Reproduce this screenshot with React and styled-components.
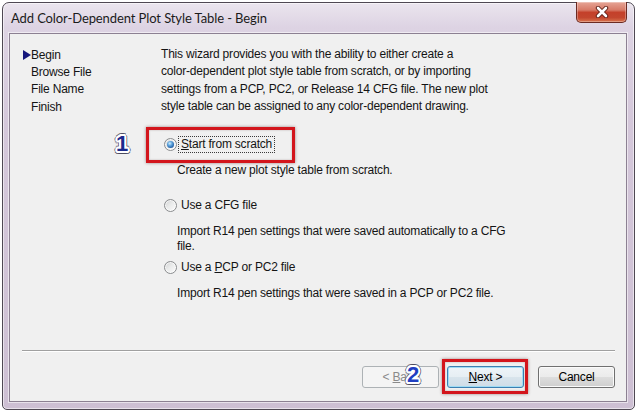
import React from "react";
import styled, { createGlobalStyle, css } from "styled-components";

const GlobalStyle = createGlobalStyle`
  html, body {
    margin: 0;
    background: #ffffff;
  }
  body {
    padding: 2px;
    font-family: "Liberation Sans", Arial, sans-serif;
  }
`;

// ring of hard text-shadows, used to outline the numbered callout badges
const ring = (r, color) => {
  const steps = 12;
  const out = [];
  for (let i = 0; i < steps; i++) {
    const a = (i / steps) * Math.PI * 2;
    out.push(`${(Math.cos(a) * r).toFixed(2)}px ${(Math.sin(a) * r).toFixed(2)}px 0 ${color}`);
  }
  return out.join(", ");
};

const Window = styled.div`
  box-sizing: border-box;
  width: 633px;
  height: 408px;
  display: flex;
  flex-direction: column;
  padding: 0 7px 7px 6px;
  border: 1px solid #4f4853;
  border-radius: 7px 7px 5px 5px;
  background: linear-gradient(180deg, #ebe5ee 0%, #ddd3e3 6%, #d4c7da 30%, #cdbfd3 100%);
  box-shadow: inset 0 0 0 1px rgba(255, 255, 255, 0.55);
`;

const TitleBar = styled.div`
  flex: 0 0 30px;
  display: flex;
  align-items: flex-start;
`;

const Title = styled.div`
  margin: 7px 0 0 2px;
  font-family: Lato, "Open Sans", sans-serif;
  font-size: 13px;
  letter-spacing: -0.1px;
  line-height: 17px;
  color: #1b1b1b;
`;

const CloseButton = styled.div`
  box-sizing: border-box;
  margin: -1px 0 0 auto;
  width: 51px;
  height: 21px;
  display: flex;
  align-items: center;
  justify-content: center;
  border: 1px solid #6b2a22;
  border-top: none;
  border-radius: 0 0 5px 5px;
  background: linear-gradient(180deg, #e6a596 0%, #d77a67 40%, #c4402a 52%, #c3462e 78%, #d9744f 100%);
  box-shadow: inset 0 0 0 1px rgba(255, 255, 255, 0.3);
`;

const Client = styled.div`
  flex: 1;
  display: flex;
  flex-direction: column;
  background: #f0f0f0;
  border: 1px solid #8c8092;
  box-shadow: 0 0 0 1px rgba(255, 255, 255, 0.55);
  color: #141414;
  font-size: 12px;
  letter-spacing: -0.2px;
`;

const Main = styled.div`
  flex: 1;
  display: grid;
  grid-template-columns: 151px 1fr;
  padding-top: 12px;
`;

const StepList = styled.ul`
  list-style: none;
  margin: 0;
  padding: 0 0 0 13px;
`;

const StepItem = styled.li`
  display: flex;
  align-items: center;
  height: 17.3px;
`;

const StepMarker = styled.span`
  flex: 0 0 8px;
  height: 10px;
  box-sizing: border-box;
  ${(p) =>
    p.$active &&
    css`
      width: 0;
      border-left: 8px solid #16177c;
      border-top: 5px solid transparent;
      border-bottom: 5px solid transparent;
    `}
`;

const Content = styled.div`
  padding-right: 16px;
`;

const Intro = styled.p`
  margin: 0;
  line-height: 17.3px;
`;

const Options = styled.div`
  padding: 0 0 0 3px;
  margin-top: 21px;
`;

const Option = styled.div`
  margin-top: ${(p) => p.$gap || 0}px;
`;

const OptionRow = styled.div`
  position: relative;
  display: flex;
  align-items: center;
  gap: 1px;
  width: fit-content;
  height: 17px;
`;

const Radio = styled.span`
  position: relative;
  box-sizing: border-box;
  width: 13px;
  height: 13px;
  border-radius: 50%;
  border: 1px solid #8a8c8e;
  background: linear-gradient(135deg, #cfd0d1 0%, #e9eaea 45%, #fdfdfd 100%);
  box-shadow: inset 0 0 0 1px rgba(255, 255, 255, 0.7);

  ${(p) =>
    p.$checked &&
    css`
      &::after {
        content: "";
        position: absolute;
        left: 2px;
        top: 2px;
        width: 7px;
        height: 7px;
        border-radius: 50%;
        background: radial-gradient(circle at 40% 35%, #d4efff 0%, #5fa5dd 35%, #1d5aa3 75%, #173f73 100%);
      }
    `}
`;

const OptionLabel = styled.span`
  padding: 0 2px;
  line-height: 15px;
  border: 1px dotted ${(p) => (p.$focused ? "#3a3a3a" : "transparent")};
`;

const Description = styled.p`
  margin: 10px 0 0 13px;
  line-height: 15px;
`;

const Callout = styled.div`
  position: absolute;
  inset: ${(p) => p.$inset};
  border: 3px solid #d3151c;
  box-shadow: 0 0 3px rgba(60, 0, 0, 0.45), inset 0 0 2px rgba(60, 0, 0, 0.3);
  pointer-events: none;
`;

const Badge = styled.span`
  position: absolute;
  left: ${(p) => p.$left}px;
  top: ${(p) => p.$top}px;
  font-family: "Liberation Sans", Arial, sans-serif;
  font-weight: bold;
  font-size: ${(p) => p.$size}px;
  line-height: 1;
  letter-spacing: 0;
  color: ${(p) => p.$color};
  text-shadow: ${ring(2, "#ffffff")}, ${ring(3, "rgba(70,70,90,0.7)")};
`;

const Separator = styled.div`
  margin: 0 11px 0 12px;
  height: 0;
  border-top: 1px solid #a0a0a0;
  border-bottom: 1px solid #ffffff;
`;

const ButtonRow = styled.div`
  display: flex;
  justify-content: flex-end;
  padding: 14px 11px 13px 0;
`;

const ButtonSlot = styled.div`
  position: relative;
  margin-left: ${(p) => p.$gap || 0}px;
`;

const Button = styled.button`
  box-sizing: border-box;
  width: 77px;
  height: 22px;
  padding: 0;
  font-family: "Liberation Sans", Arial, sans-serif;
  font-size: 12px;
  letter-spacing: -0.2px;
  color: #000;
  border: 1px solid #707070;
  border-radius: 3px;
  background: linear-gradient(180deg, #f2f2f2 0%, #ebebeb 50%, #dddddd 51%, #cfcfcf 100%);
  box-shadow: inset 0 0 0 1px #fbfbfb;

  ${(p) =>
    p.$variant === "disabled" &&
    css`
      color: #8a8a8a;
      border-color: #adb2b5;
      background: #f4f4f4;
      box-shadow: none;
    `}

  ${(p) =>
    p.$variant === "default" &&
    css`
      border-color: #3c7fb1;
      background: linear-gradient(180deg, #eef4f8 0%, #e6eef3 50%, #d8e4ec 51%, #cfdde7 100%);
      box-shadow: inset 0 0 0 1px #9fdcf4;
    `}
`;

const CloseIcon = () => (
  <svg width="14" height="12" viewBox="0 0 14 12">
    <path d="M3 2 L11 10 M11 2 L3 10" stroke="#5a1a12" strokeWidth="4.4" strokeLinecap="round" />
    <path d="M3 2 L11 10 M11 2 L3 10" stroke="#ffffff" strokeWidth="2.6" strokeLinecap="round" />
  </svg>
);

const steps = ["Begin", "Browse File", "File Name", "Finish"];

const App = () => {
  return (
    <React.Fragment>
      <GlobalStyle />
      <Window>
        <TitleBar>
          <Title>Add Color-Dependent Plot Style Table - Begin</Title>
          <CloseButton>
            <CloseIcon />
          </CloseButton>
        </TitleBar>
        <Client>
          <Main>
            <StepList>
              {steps.map((s, i) => (
                <StepItem key={s}>
                  <StepMarker $active={i === 0} />
                  {s}
                </StepItem>
              ))}
            </StepList>
            <Content>
              <Intro>
                This wizard provides you with the ability to either create a
                <br />
                color-dependent plot style table from scratch, or by importing
                <br />
                settings from a PCP, PC2, or Release 14 CFG file. The new plot
                <br />
                style table can be assigned to any color-dependent drawing.
              </Intro>
              <Options>
                <Option>
                  <OptionRow>
                    <Radio $checked />
                    <OptionLabel $focused>
                      <u>S</u>tart from scratch
                    </OptionLabel>
                    <Callout $inset="-9px -20px -10px -18px" />
                    <Badge $left={-48} $top={-3} $size={22} $color="#1c2a8c">
                      1
                    </Badge>
                  </OptionRow>
                  <Description>Create a new plot style table from scratch.</Description>
                </Option>
                <Option $gap={19}>
                  <OptionRow>
                    <Radio />
                    <OptionLabel>Use a CFG file</OptionLabel>
                  </OptionRow>
                  <Description>
                    Import R14 pen settings that were saved automatically to a CFG
                    <br />
                    file.
                  </Description>
                </Option>
                <Option $gap={5}>
                  <OptionRow>
                    <Radio />
                    <OptionLabel>
                      Use a <u>P</u>CP or PC2 file
                    </OptionLabel>
                  </OptionRow>
                  <Description>Import R14 pen settings that were saved in a PCP or PC2 file.</Description>
                </Option>
              </Options>
            </Content>
          </Main>
          <Separator />
          <ButtonRow>
            <ButtonSlot>
              <Button $variant="disabled">
                &lt; <u>B</u>ack
              </Button>
            </ButtonSlot>
            <ButtonSlot $gap={8}>
              <Button $variant="default">
                <u>N</u>ext &gt;
              </Button>
              <Callout $inset="-7px -4px -6px -5px" />
              <Badge $left={-40} $top={-2} $size={22} $color="#1f3fc2">
                2
              </Badge>
            </ButtonSlot>
            <ButtonSlot $gap={14}>
              <Button>Cancel</Button>
            </ButtonSlot>
          </ButtonRow>
        </Client>
      </Window>
    </React.Fragment>
  );
};

export default App;
